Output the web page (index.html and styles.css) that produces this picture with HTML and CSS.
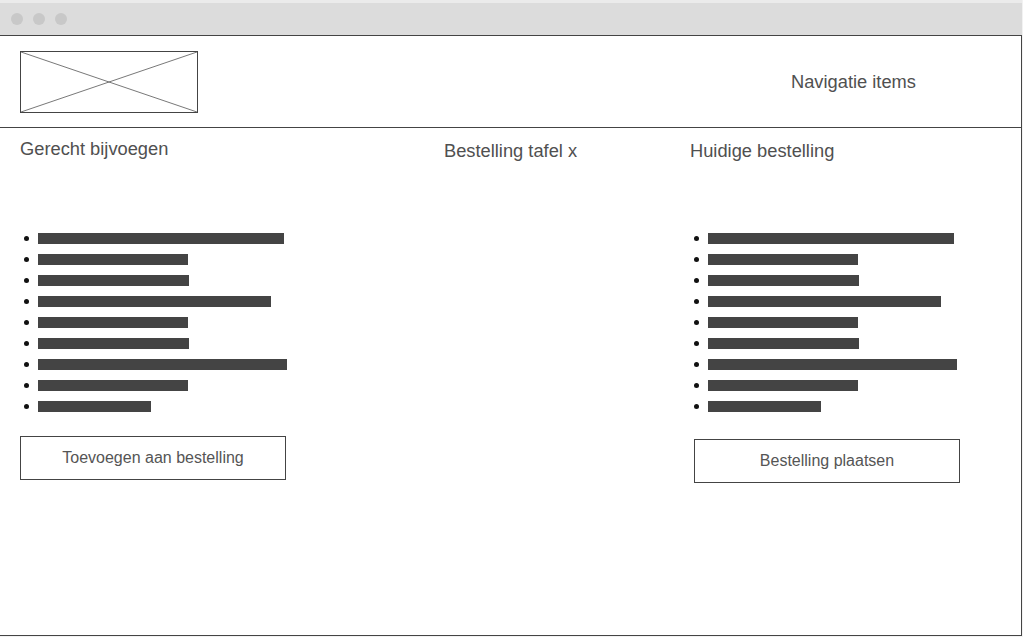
FILE: index.html
```html
<!DOCTYPE html>
<html lang="nl">
<head>
<meta charset="utf-8">
<title>Bestelling</title>
<link rel="stylesheet" href="styles.css">
</head>
<body>
<div class="window">
  <div class="titlebar">
    <span class="dot"></span><span class="dot"></span><span class="dot"></span>
  </div>
  <div class="frame">
    <header class="header">
      <div class="logo">
        <svg width="178" height="62" viewBox="0 0 178 62" preserveAspectRatio="none">
          <rect x="0.5" y="0.5" width="177" height="61" fill="none" stroke="#444" stroke-width="1"/>
          <line x1="1" y1="1" x2="177" y2="61" stroke="#555" stroke-width="0.8"/>
          <line x1="177" y1="1" x2="1" y2="61" stroke="#555" stroke-width="0.8"/>
        </svg>
      </div>
      <nav class="nav">Navigatie items</nav>
    </header>
    <main class="main">
      <section class="col col-left">
        <h2 class="heading">Gerecht bijvoegen</h2>
        <ul class="list">
          <li class="item"><span class="bar" style="width:246px"></span></li>
          <li class="item"><span class="bar" style="width:150px"></span></li>
          <li class="item"><span class="bar" style="width:151px"></span></li>
          <li class="item"><span class="bar" style="width:233px"></span></li>
          <li class="item"><span class="bar" style="width:150px"></span></li>
          <li class="item"><span class="bar" style="width:151px"></span></li>
          <li class="item"><span class="bar" style="width:249px"></span></li>
          <li class="item"><span class="bar" style="width:150px"></span></li>
          <li class="item"><span class="bar" style="width:113px"></span></li>
        </ul>
        <button class="btn btn-left">Toevoegen aan bestelling</button>
      </section>
      <section class="col col-mid">
        <h2 class="heading heading-low">Bestelling tafel x</h2>
      </section>
      <section class="col col-right">
        <h2 class="heading heading-low">Huidige bestelling</h2>
        <ul class="list list-right">
          <li class="item"><span class="bar" style="width:246px"></span></li>
          <li class="item"><span class="bar" style="width:150px"></span></li>
          <li class="item"><span class="bar" style="width:151px"></span></li>
          <li class="item"><span class="bar" style="width:233px"></span></li>
          <li class="item"><span class="bar" style="width:150px"></span></li>
          <li class="item"><span class="bar" style="width:151px"></span></li>
          <li class="item"><span class="bar" style="width:249px"></span></li>
          <li class="item"><span class="bar" style="width:150px"></span></li>
          <li class="item"><span class="bar" style="width:113px"></span></li>
        </ul>
        <button class="btn btn-right">Bestelling plaatsen</button>
      </section>
    </main>
  </div>
</div>
</body>
</html>
```

FILE: styles.css
```css
* { box-sizing: border-box; }

html, body {
  margin: 0;
  padding: 0;
  background: #f2f2f2;
  font-family: "Liberation Sans", Arial, sans-serif;
  color: #555;
}

.window {
  width: 1022px;
  background: #fff;
}

.titlebar {
  height: 36px;
  background: #dcdcdc;
  border-top: 3px solid #ebebeb;
  border-bottom: 1px solid #444;
  display: flex;
  align-items: center;
  padding-left: 11px;
  gap: 10px;
}

.dot {
  width: 12px;
  height: 12px;
  border-radius: 50%;
  background: #c8c8c8;
}

.frame {
  height: 600px;
  background: #fff;
  border-right: 1px solid #444;
  border-bottom: 1px solid #444;
}

.header {
  height: 92px;
  border-bottom: 1px solid #444;
  display: flex;
  align-items: center;
  padding-left: 20px;
}

.logo {
  width: 178px;
  height: 62px;
}

.logo svg { display: block; }

.nav {
  margin-left: auto;
  width: 230px;
  font-size: 18.3px;
  line-height: 21px;
  color: #505050;
}

.main {
  display: grid;
  grid-template-columns: 424px 246px 1fr;
  padding-left: 20px;
}

.col {
  display: flex;
  flex-direction: column;
  align-items: flex-start;
}

.heading {
  margin: 10px 0 0 0;
  font-size: 18.3px;
  font-weight: normal;
  line-height: 21px;
  color: #505050;
}

.heading-low { margin-top: 12px; }

.list {
  list-style: none;
  margin: 69px 0 0 0;
  padding: 0;
}

.list-right { margin-top: 67px; }

.item {
  height: 21px;
  display: flex;
  align-items: center;
  padding-left: 4px;
}

.item::before {
  content: "";
  width: 5px;
  height: 5px;
  border-radius: 50%;
  background: #111;
  margin-right: 9px;
}

.bar {
  display: block;
  height: 11px;
  background: #444;
}

.btn {
  width: 266px;
  height: 44px;
  border: 1px solid #444;
  background: #fff;
  font-family: "Liberation Sans", Arial, sans-serif;
  font-size: 16px;
  color: #555;
  display: flex;
  align-items: center;
  justify-content: center;
  padding: 0;
}

.btn-left { margin-top: 19px; }

.btn-right { margin-top: 22px; margin-left: 4px; }
```
